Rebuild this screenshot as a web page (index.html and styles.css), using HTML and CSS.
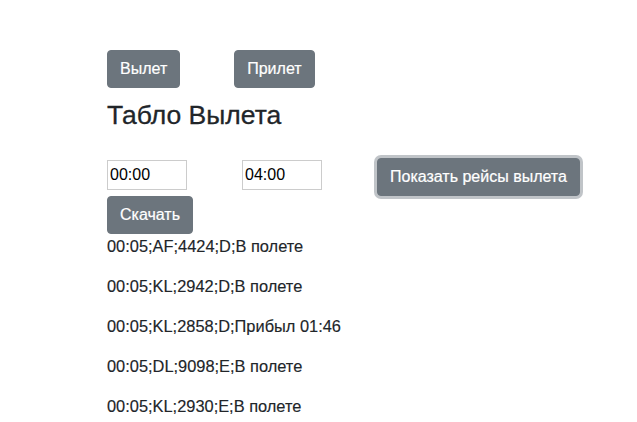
FILE: index.html
```html
<!DOCTYPE html>
<html lang="ru">
<head>
<meta charset="utf-8">
<title>Табло Вылета</title>
<link rel="stylesheet" href="styles.css">
</head>
<body>
<div class="page">
  <div class="nav">
    <button class="btn">Вылет</button>
    <button class="btn">Прилет</button>
  </div>
  <h3 class="title">Табло Вылета</h3>
  <div class="filters">
    <input class="time" type="text" value="00:00">
    <input class="time" type="text" value="04:00">
    <button class="btn btn-focus">Показать рейсы вылета</button>
  </div>
  <button class="btn">Скачать</button>
  <div class="list">
    <p>00:05;AF;4424;D;В полете</p>
    <p>00:05;KL;2942;D;В полете</p>
    <p>00:05;KL;2858;D;Прибыл 01:46</p>
    <p>00:05;DL;9098;E;В полете</p>
    <p>00:05;KL;2930;E;В полете</p>
  </div>
</div>
</body>
</html>
```

FILE: styles.css
```css
html, body {
  margin: 0;
  padding: 0;
  background: #fff;
}
body {
  font-family: "Liberation Sans", Arial, sans-serif;
  font-size: 16px;
  line-height: 1.5;
  color: #212529;
}
.page {
  padding: 50px 0 0 107px;
}
.nav {
  display: flex;
  gap: 54px;
}
.btn {
  display: block;
  font-family: "Liberation Sans", Arial, sans-serif;
  font-size: 16px;
  line-height: 24px;
  padding: 6px 12px;
  border: 1px solid #6c757d;
  border-radius: 4px;
  background: #6c757d;
  color: #fff;
  cursor: pointer;
  -webkit-text-stroke: 0.2px #fff;
}
.btn-focus {
  box-shadow: 0 0 0 3px rgba(130, 138, 145, 0.5);
}
.title {
  font-size: 26.5px;
  font-weight: 500;
  line-height: 1.2;
  margin: 12px 0 26px;
  -webkit-text-stroke: 0.3px #212529;
}
.filters {
  display: flex;
  align-items: flex-start;
  gap: 55px;
}
.time {
  box-sizing: border-box;
  width: 80px;
  height: 30px;
  margin-top: 2px;
  border: 1px solid #cccccc;
  padding: 1px 2px;
  font-family: "Liberation Sans", Arial, sans-serif;
  font-size: 16px;
  color: #000;
  outline: none;
}
.list p {
  margin: 0 0 16px;
  font-size: 16.4px;
  line-height: 24px;
  -webkit-text-stroke: 0.15px #212529;
}
```
